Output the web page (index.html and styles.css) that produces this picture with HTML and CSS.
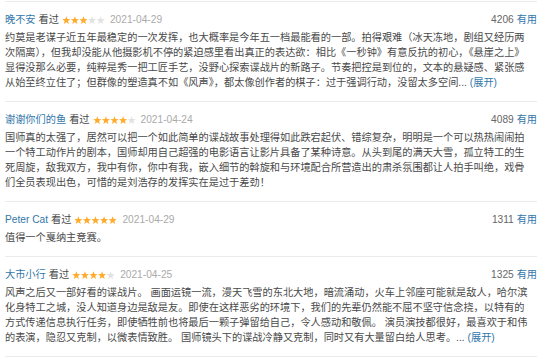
FILE: index.html
```html
<!DOCTYPE html>
<html lang="zh-CN">
<head>
    <meta charset="UTF-8">
    <meta name="viewport" content="width=device-width, initial-scale=1.0">
    <title>短评</title>
    <link rel="stylesheet" href="styles.css">
</head>
<body>
    <!-- star shape shared by all ratings -->
    <svg class="defs" width="0" height="0" aria-hidden="true">
        <symbol id="star" viewBox="0 0 10 10">
            <polygon points="5,0.3 6.23,3.6 9.76,3.76 7,5.95 7.94,9.35 5,7.4 2.06,9.35 3,5.95 0.24,3.76 3.77,3.6"/>
        </symbol>
    </svg>

    <div class="comments">
        <div class="comment-item">
            <div class="comment-info">
                <span class="meta">
                    <a class="user" href="#">晚不安</a>
                    <span class="status">看过</span>
                    <svg class="rating" viewBox="0 0 50 10">
                        <use href="#star" x="0" width="10" height="10" class="on"/><use href="#star" x="10" width="10" height="10" class="on"/><use href="#star" x="20" width="10" height="10" class="on"/><use href="#star" x="30" width="10" height="10"/><use href="#star" x="40" width="10" height="10"/>
                    </svg>
                    <span class="time">2021-04-29</span>
                </span>
                <span class="votes"><span class="count">4206</span> <a href="#">有用</a></span>
            </div>
            <p class="comment-content">约莫是老谋子近五年最稳定的一次发挥，也大概率是今年五一档最能看的一部。拍得艰难（冰天冻地，剧组又经历两次隔离），但我却没能从他摄影机不停的紧迫感里看出真正的表达欲：相比《一秒钟》有意反抗的初心，《悬崖之上》显得没那么必要，纯粹是秀一把工匠手艺，没野心探索谍战片的新路子。节奏把控是到位的，文本的悬疑感、紧张感从始至终立住了；但群像的塑造真不如《风声》，都太像创作者的棋子：过于强调行动，没留太多空间...<a class="expand" href="#">(展开)</a></p>
        </div>

        <div class="comment-item">
            <div class="comment-info">
                <span class="meta">
                    <a class="user" href="#">谢谢你们的鱼</a>
                    <span class="status">看过</span>
                    <svg class="rating" viewBox="0 0 50 10">
                        <use href="#star" x="0" width="10" height="10" class="on"/><use href="#star" x="10" width="10" height="10" class="on"/><use href="#star" x="20" width="10" height="10" class="on"/><use href="#star" x="30" width="10" height="10" class="on"/><use href="#star" x="40" width="10" height="10"/>
                    </svg>
                    <span class="time">2021-04-24</span>
                </span>
                <span class="votes"><span class="count">4089</span> <a href="#">有用</a></span>
            </div>
            <p class="comment-content">国师真的太强了，居然可以把一个如此简单的谍战故事处理得如此跌宕起伏、错综复杂，明明是一个可以热热闹闹拍一个特工动作片的剧本，国师却用自己超强的电影语言让影片具备了某种诗意。从头到尾的满天大雪，孤立特工的生死周旋，敌我双方，我中有你，你中有我，嵌入细节的斡旋和与环境配合所营造出的肃杀氛围都让人拍手叫绝，戏骨们全员表现出色，可惜的是刘浩存的发挥实在是过于差劲！</p>
        </div>

        <div class="comment-item">
            <div class="comment-info">
                <span class="meta">
                    <a class="user" href="#">Peter Cat</a>
                    <span class="status">看过</span>
                    <svg class="rating" viewBox="0 0 50 10">
                        <use href="#star" x="0" width="10" height="10" class="on"/><use href="#star" x="10" width="10" height="10" class="on"/><use href="#star" x="20" width="10" height="10" class="on"/><use href="#star" x="30" width="10" height="10" class="on"/><use href="#star" x="40" width="10" height="10" class="on"/>
                    </svg>
                    <span class="time">2021-04-29</span>
                </span>
                <span class="votes"><span class="count">1311</span> <a href="#">有用</a></span>
            </div>
            <p class="comment-content">值得一个戛纳主竞赛。</p>
        </div>

        <div class="comment-item">
            <div class="comment-info">
                <span class="meta">
                    <a class="user" href="#">大市小行</a>
                    <span class="status">看过</span>
                    <svg class="rating" viewBox="0 0 50 10">
                        <use href="#star" x="0" width="10" height="10" class="on"/><use href="#star" x="10" width="10" height="10" class="on"/><use href="#star" x="20" width="10" height="10" class="on"/><use href="#star" x="30" width="10" height="10" class="on"/><use href="#star" x="40" width="10" height="10"/>
                    </svg>
                    <span class="time">2021-04-25</span>
                </span>
                <span class="votes"><span class="count">1325</span> <a href="#">有用</a></span>
            </div>
            <p class="comment-content">风声之后又一部好看的谍战片。 画面运镜一流，漫天飞雪的东北大地，暗流涌动，火车上邻座可能就是敌人，哈尔滨化身特工之城，没人知道身边是敌是友。即使在这样恶劣的环境下，我们的先辈仍然能不屈不坚守信念挠，以特有的方式传递信息执行任务，即使牺牲前也将最后一颗子弹留给自己，令人感动和敬佩。 演员演技都很好，最喜欢于和伟的表演，隐忍又克制，以微表情致胜。 国师镜头下的谍战冷静又克制，同时又有大量留白给人思考。...<a class="expand" href="#">(展开)</a></p>
        </div>
    </div>
</body>
</html>
```

FILE: styles.css
```css
* {
    margin: 0;
    padding: 0;
    box-sizing: border-box;
}

body {
    font-family: 'Liberation Sans', 'Noto Sans CJK SC', sans-serif;
    font-size: 10.2px;
    color: #494949;
    background: #fff;
}

a {
    color: #37a;
    text-decoration: none;
}

.defs {
    position: absolute;
}

.comments {
    margin: 1px 13px 0 5px;
}

.comment-item {
    border-top: 1px solid #ebebeb;
    padding: 10px 0 11.5px;
}

.comment-item:last-child {
    border-bottom: 1px solid #ebebeb;
}

.comment-info {
    display: flex;
    justify-content: space-between;
    align-items: center;
    height: 16px;
    line-height: 16px;
}

.meta {
    display: flex;
    align-items: center;
    gap: 3px;
}

.status {
    color: #494949;
}

.rating {
    width: 43px;
    height: 8.6px;
    fill: #e2e2e2;
    margin: 0 2px 0 0;
}

.rating .on {
    fill: #ffac2d;
}

.time {
    color: #aaa;
}

.count {
    color: #666;
}

.comment-content {
    margin-top: 1.5px;
    line-height: 15px;
    padding-right: 5px;
}

.expand {
    margin-left: 3px;
}
```
